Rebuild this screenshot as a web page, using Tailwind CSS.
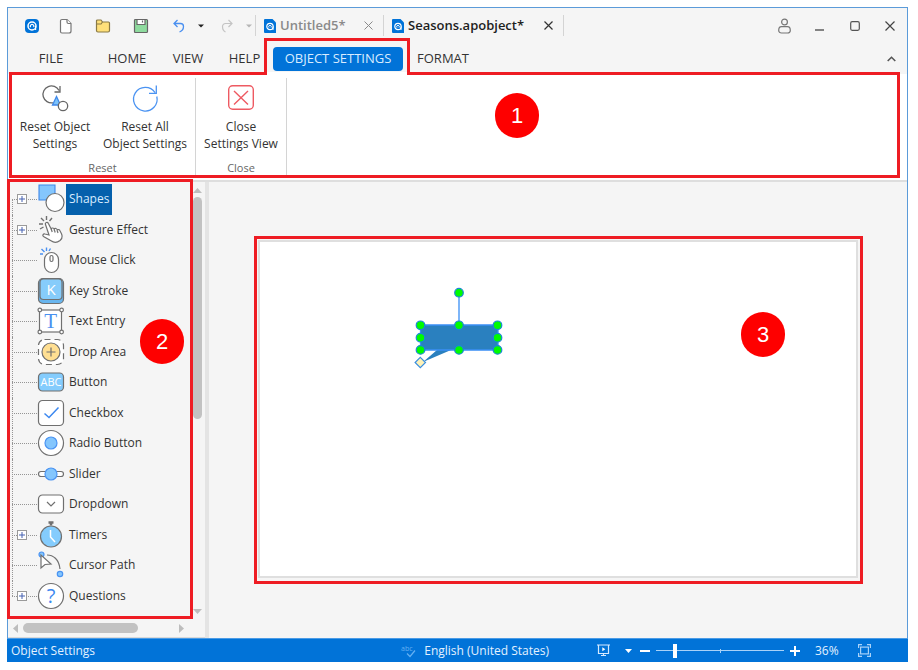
<!DOCTYPE html>
<html lang="en">
<head>
    <meta charset="UTF-8">
    <meta name="viewport" content="width=device-width, initial-scale=1.0">
    <title>Object Settings</title>
    <script src="https://cdn.jsdelivr.net/npm/@tailwindcss/browser@4"></script>
</head>
<body class="bg-white font-['Open_Sans','Noto_Sans',sans-serif] text-[12px] text-[#333]">
    <div class="h-screen pt-[7px] pl-[7px] pr-[10px] pb-2">
        <div class="h-full flex flex-col bg-[#f5f5f5] border border-[#5b9bd9] border-b-0">

            <!-- title bar -->
            <header class="h-[35px] shrink-0 flex items-center">
                <button class="ml-2 w-8 flex justify-center" aria-label="Application menu">
                    <svg class="w-[14px] h-[14px]" viewBox="0 0 14 14" fill="none">
                        <rect width="14" height="14" rx="4" fill="#0173d8"/>
                        <circle cx="7" cy="7" r="4" stroke="#fff" stroke-width="1.5"/>
                        <path d="M5.6 8.2a1.8 1.8 0 1 1 3 0M10.6 7v4" stroke="#fff" stroke-width="1.2"/>
                    </svg>
                </button>
                <button class="w-9 flex justify-center" aria-label="New">
                    <svg class="w-[14px] h-4" viewBox="0 0 14 16" fill="#fff" stroke="#777" stroke-width="1.2">
                        <path d="M3 1.5h5l4 4v7.500a2 2 0 0 1-2 2H3a1.500 1.500 0 0 1-1.500-1.500V3A1.500 1.500 0 0 1 3 1.500z"/>
                        <path d="M8 1.500v2.500a1.500 1.500 0 0 0 1.500 1.500H12"/>
                    </svg>
                </button>
                <button class="w-[38px] flex justify-center" aria-label="Open">
                    <svg class="w-4 h-4" viewBox="0 0 16 16" fill="#ffe07a" stroke="#8a7a45" stroke-width="1.2">
                        <path d="M1.500 12.500V3q0-1 1-1h3.500l1.500 2h6q1 0 1 1v7.500q0 1.500-1.500 1.500H3q-1.500 0-1.500-1.500z"/>
                        <path d="M1.500 6h4.500l1.500-2"/>
                    </svg>
                </button>
                <button class="w-[38px] flex justify-center" aria-label="Save">
                    <svg class="w-4 h-4" viewBox="0 0 16 16" fill="#8edb9e" stroke="#666" stroke-width="1.200">
                        <path d="M1.500 2.500q0-1 1-1h11q1 0 1 1v11q0 1-1 1h-11q-1 0-1-1z"/>
                        <path d="M4 1.500h8v5H4z" fill="#fff"/>
                        <path d="M9.500 2.500v2"/>
                    </svg>
                </button>
                <button class="w-[38px] flex justify-center" aria-label="Undo">
                    <svg class="w-3 h-[14px]" viewBox="0 0 12 14" fill="none" stroke="#4a90f0" stroke-width="1.300">
                        <path d="M4.500 1 1 4.500 4.500 8M1 4.500h6.500a3 3 0 0 1 3 3c0 2.500-1.500 4.500-4 5.500"/>
                    </svg>
                </button>
                <button class="w-[10px] flex justify-start" aria-label="Undo history">
                    <svg class="w-[6px] h-1" viewBox="0 0 6 4" fill="#222"><path d="M0 .5h6L3 3.500z"/></svg>
                </button>
                <button class="w-[38px] flex justify-center" aria-label="Redo">
                    <svg class="w-3 h-[14px]" viewBox="0 0 12 14" fill="none" stroke="#c4c4c4" stroke-width="1.200">
                        <path d="M7.500 1 11 4.500 7.500 8M11 4.500H4.500a3 3 0 0 0-3 3c0 2.500 1 4.500 3 5.500"/>
                    </svg>
                </button>
                <button class="w-[9px] flex justify-start" aria-label="Redo history">
                    <svg class="w-[6px] h-1" viewBox="0 0 6 4" fill="#b5b5b5"><path d="M0 .5h6L3 3.500z"/></svg>
                </button>
                <nav class="flex text-[13px]">
                    <div class="w-32 h-[21px] pl-2 pr-[10px] flex items-center border-l border-[#d4d4d4]">
                        <svg class="w-3 h-[14px] shrink-0" viewBox="0 0 12 14" fill="none">
                            <path d="M1 0h7.500L12 3.500V14H1a1 1 0 0 1-1-1V1a1 1 0 0 1 1-1z" fill="#0173d8"/>
                            <circle cx="6" cy="7.500" r="3.200" stroke="#fff" stroke-width="1.200"/>
                            <path d="M5 8.500a1.300 1.300 0 1 1 2 0M9 7.500v3.500" stroke="#fff"/>
                        </svg>
                        <a href="#" class="ml-1 font-semibold text-[#8a8a8a]">Untitled5*</a>
                        <button class="ml-auto" aria-label="Close Untitled5">
                            <svg class="w-[9px] h-[9px]" viewBox="0 0 9 9" stroke="#8a8a8a"><path d="M.5.5l8 8M8.500.5l-8 8"/></svg>
                        </button>
                    </div>
                    <div class="w-[181px] h-[21px] pl-2 pr-[10px] flex items-center border-x border-[#d4d4d4]">
                        <svg class="w-3 h-[14px] shrink-0" viewBox="0 0 12 14" fill="none">
                            <path d="M1 0h7.500L12 3.500V14H1a1 1 0 0 1-1-1V1a1 1 0 0 1 1-1z" fill="#0173d8"/>
                            <circle cx="6" cy="7.500" r="3.200" stroke="#fff" stroke-width="1.200"/>
                            <path d="M5 8.500a1.300 1.300 0 1 1 2 0M9 7.500v3.500" stroke="#fff"/>
                        </svg>
                        <a href="#" class="ml-1 font-semibold text-[#1e1e1e]">Seasons.apobject*</a>
                        <button class="ml-auto" aria-label="Close Seasons.apobject">
                            <svg class="w-[9px] h-[9px]" viewBox="0 0 9 9" stroke="#333" stroke-width="1.200"><path d="M.5.5l8 8M8.500.5l-8 8"/></svg>
                        </button>
                    </div>
                </nav>
                <div class="ml-auto flex items-center">
                    <button class="w-[35px] flex justify-center" aria-label="Account">
                        <svg class="w-[13px] h-4" viewBox="0 0 13 16" fill="none" stroke="#777" stroke-width="1.200">
                            <circle cx="6.500" cy="4" r="2.900"/>
                            <path d="M3.500 8.700h6c1.800 0 2.800 2 2.800 3.800 0 1.700-1.300 2.500-2.800 2.500h-6C2 15 .7 14.200.7 12.500c0-1.800 1-3.800 2.800-3.800z"/>
                        </svg>
                    </button>
                    <button class="w-[35px] h-4 flex justify-center items-center" aria-label="Minimize">
                        <svg class="w-[9px] h-3" viewBox="0 0 9 12" stroke="#444" stroke-width="1.300"><path d="M0 10h9"/></svg>
                    </button>
                    <button class="w-[35px] flex justify-center" aria-label="Maximize">
                        <svg class="w-[10px] h-[10px]" viewBox="0 0 10 10" fill="none" stroke="#555" stroke-width="1.200"><rect x=".7" y=".7" width="8.600" height="8.600" rx="1.500"/></svg>
                    </button>
                    <button class="w-[35px] flex justify-center" aria-label="Close">
                        <svg class="w-[10px] h-[10px]" viewBox="0 0 10 10" stroke="#444" stroke-width="1.200"><path d="M.5.5l9 9M9.500.5l-9 9"/></svg>
                    </button>
                </div>
            </header>

            <!-- menu tabs -->
            <nav class="h-[31px] shrink-0 flex items-center text-[13px]">
                <button class="w-[86px]">FILE</button>
                <button class="w-[66px]">HOME</button>
                <button class="w-14">VIEW</button>
                <button class="w-[57px]">HELP</button>
                <div class="relative">
                    <button class="w-[130px] h-6 rounded-[4px] bg-[#0173d8] text-[#d9ecff] block">OBJECT SETTINGS</button>
                    <!-- callout outline around the tab, open at the bottom -->
                    <div class="absolute z-20 pointer-events-none -top-[9px] -left-[9px] -right-[7px] h-[37px] border-3 border-b-0 border-[#ee1c23] flex items-end">
                        <div class="w-full h-[3px] bg-white"></div>
                    </div>
                </div>
                <button class="w-20">FORMAT</button>
                <button class="ml-auto w-8 flex justify-center" aria-label="Collapse ribbon">
                    <svg class="w-[9px] h-[6px]" viewBox="0 0 9 6" fill="none" stroke="#555" stroke-width="1.600"><path d="M.7 5 4.500 1.300 8.300 5"/></svg>
                </button>
            </nav>

            <!-- ribbon -->
            <section class="relative h-[108px] shrink-0 bg-white border-b-2 border-[#dedede] flex text-center leading-[17px]">
                <div class="w-[188px] flex flex-col mt-1 mb-1 pl-[2px] border-r border-[#d4d4d4]">
                    <div class="flex">
                        <button class="w-[90px] flex flex-col items-center">
                            <svg class="w-8 h-8 mt-1 mb-1" viewBox="0 0 32 32" fill="none" stroke="#666" stroke-width="1.300">
                                <path d="M14 20.800A8.500 8.500 0 1 1 20 8.500M21 4v6h-5.500"/>
                                <path d="M17.500 14.500 21.500 23h-8z" fill="#7cc3fb" stroke="#3f87e8"/>
                                <circle cx="24" cy="24" r="4.700" fill="#fff"/>
                            </svg>
                            <span>Reset Object<br>Settings</span>
                        </button>
                        <button class="w-[90px] flex flex-col items-center">
                            <svg class="w-8 h-8 mt-1 mb-1" viewBox="0 0 32 32" fill="none" stroke="#4a93f2" stroke-width="1.300">
                                <path d="M27.800 14.500A11.800 11.800 0 1 1 26 10.500M27.300 3.500v7.800H20"/>
                            </svg>
                            <span>Reset All<br>Object Settings</span>
                        </button>
                    </div>
                    <div class="mt-auto text-[11px] text-[#666]">Reset</div>
                </div>
                <div class="w-[91px] flex flex-col mt-1 mb-1 border-r border-[#d4d4d4]">
                    <button class="flex flex-col items-center">
                        <svg class="w-8 h-8 mt-1 mb-1" viewBox="0 0 32 32" fill="none" stroke="#ee5a62" stroke-width="1.400">
                            <rect x="3.700" y="3.700" width="24.600" height="23.600" rx="4"/>
                            <path d="M9 9l14 13.500M23 9 9 22.500"/>
                        </svg>
                        <span>Close<br>Settings View</span>
                    </button>
                    <div class="mt-auto text-[11px] text-[#666]">Close</div>
                </div>
                <div class="absolute z-10 pointer-events-none -top-[2px] left-px right-[7px] bottom-[2px] border-3 border-[#ee1c23]"></div>
                <div class="absolute z-10 top-[19px] left-[487px] w-11 h-[45px] rounded-full bg-[#fe0000] text-white text-[22px] font-['Liberation_Sans',sans-serif] flex items-center justify-center">1</div>
            </section>

            <!-- body -->
            <main class="flex-1 min-h-0 flex">
                <aside class="relative w-[201px] shrink-0 flex flex-col border-r-4 border-[#e4e4e4]">
                    <div class="flex-1 min-h-0 flex">
                        <ul id="tree" class="flex-1 pt-[2px] pb-2 pl-1 flex flex-col text-[#333]"></ul>
                        <div class="w-3 mr-[2px] pt-[6px] pb-[5px] flex flex-col items-center">
                            <svg class="w-[9px] h-[5px]" viewBox="0 0 9 5" fill="#bdbdbd"><path d="M0 5 4.500 0 9 5z"/></svg>
                            <div class="mt-1 w-[9px] h-[52%] rounded-full bg-[#c2c2c2]"></div>
                            <svg class="mt-auto w-[9px] h-[5px]" viewBox="0 0 9 5" fill="#bdbdbd"><path d="M0 0 4.500 5 9 0z"/></svg>
                        </div>
                    </div>
                    <div class="h-[19px] shrink-0 pl-[5px] pr-[21px] flex items-center border-b border-[#d9d9d9]">
                        <svg class="w-[5px] h-[9px]" viewBox="0 0 5 9" fill="#bdbdbd"><path d="M5 0 0 4.500 5 9z"/></svg>
                        <div class="ml-[5px] w-[115px] h-[10px] rounded-full bg-[#c2c2c2]"></div>
                        <svg class="ml-auto w-[5px] h-[9px]" viewBox="0 0 5 9" fill="#bdbdbd"><path d="M0 0 5 4.500 0 9z"/></svg>
                    </div>
                    <div class="absolute z-10 pointer-events-none -top-[3px] -left-px w-[186px] bottom-[19px] border-3 border-[#ee1c23]"></div>
                    <div class="absolute z-10 top-[137px] left-[132px] w-11 h-[45px] rounded-full bg-[#fe0000] text-white text-[22px] font-['Liberation_Sans',sans-serif] flex items-center justify-center">2</div>
                </aside>

                <section class="flex-1 min-w-0 py-[54px] pl-[45px] pr-11">
                    <div class="h-full border-3 border-[#ee1c23] p-px pr-[2px] pb-[3px]">
                        <div class="relative h-full bg-white border-2 border-[#dfdfdf]">
                            <!-- selected callout shape with its handles -->
                            <svg class="absolute left-[150px] top-[43px] w-[96px] h-[92px]" viewBox="410 285 96 92">
                                <path d="M420.500 325h77.500v25h-47l-28 12 14-12h-16.500z" fill="#2a80bf"/>
                                <path d="M459 293v32M420.500 325H498v25h-77.500z" fill="none" stroke="#3a8ff5" stroke-width="1.300"/>
                                <g fill="#00fb00" stroke="#1c86d8" stroke-width="1.200">
                                    <circle cx="459" cy="292.700" r="4.300"/>
                                    <circle cx="420.500" cy="325.300" r="4.300"/>
                                    <circle cx="459" cy="325.300" r="4.300"/>
                                    <circle cx="497.500" cy="325.300" r="4.300"/>
                                    <circle cx="420.500" cy="337.700" r="4.300"/>
                                    <circle cx="497.500" cy="337.700" r="4.300"/>
                                    <circle cx="420.500" cy="349.900" r="4.300"/>
                                    <circle cx="459" cy="349.900" r="4.300"/>
                                    <circle cx="497.500" cy="349.900" r="4.300"/>
                                </g>
                                <path d="M420.300 357.300l5.200 5.200-5.200 5.200-5.200-5.200z" fill="#fff2b8" stroke="#3a8fe0" stroke-width="1.200"/>
                            </svg>
                            <div class="absolute top-[70px] left-[481px] w-11 h-[45px] rounded-full bg-[#fe0000] text-white text-[22px] font-['Liberation_Sans',sans-serif] flex items-center justify-center">3</div>
                        </div>
                    </div>
                </section>
            </main>

            <!-- status bar -->
            <footer class="h-6 shrink-0 -mx-px pl-1 flex items-center bg-[#0173d8] border-t border-[#4a9be6] text-[#e3f1ff]">
                <span>Object Settings</span>
                <div class="ml-auto flex items-center">
                    <button class="flex items-center gap-2">
                        <svg class="w-[15px] h-4 overflow-visible" viewBox="0 0 15 16" fill="none" stroke="#64b0f2">
                            <text x="0" y="8" font-size="7" fill="#64b0f2" stroke="none">abc</text>
                            <path d="M6 10.500 9 13.500 14 7.500" stroke-width="1.200"/>
                        </svg>
                        English (United States)
                    </button>
                    <button class="ml-12" aria-label="Preview">
                        <svg class="w-[13px] h-[13px] block" viewBox="0 0 13 13" fill="none" stroke="#d5eaff" stroke-width="1.200">
                            <path d="M0 1h13M1.500 1v8.500h10V1M6.500 9.500V12M4 11.500h5"/>
                            <path d="M5.300 3.300v4l3-2z" fill="#fff" stroke="none"/>
                        </svg>
                    </button>
                    <button class="ml-[15px]" aria-label="Preview options">
                        <svg class="w-[7px] h-1 block" viewBox="0 0 7 4" fill="#fff"><path d="M0 0h7L3.500 4z"/></svg>
                    </button>
                    <button class="ml-2" aria-label="Zoom out">
                        <svg class="w-[10px] h-[10px] block" viewBox="0 0 10 10" stroke="#fff" stroke-width="2"><path d="M0 5h10"/></svg>
                    </button>
                    <div class="relative ml-[6px] w-32 h-[14px]">
                        <input type="range" min="0" max="100" value="14" aria-label="Zoom" class="block w-full h-[14px] appearance-none bg-transparent bg-[linear-gradient(#a9d2f8,#a9d2f8)] bg-[length:100%_1px] bg-center bg-no-repeat [&::-webkit-slider-thumb]:appearance-none [&::-webkit-slider-thumb]:w-1 [&::-webkit-slider-thumb]:h-[14px] [&::-webkit-slider-thumb]:bg-white">
                        <div class="absolute left-1/2 top-[5px] w-px h-1 bg-[#a9d2f8]"></div>
                    </div>
                    <button class="ml-[6px]" aria-label="Zoom in">
                        <svg class="w-[10px] h-[10px] block" viewBox="0 0 10 10" stroke="#fff" stroke-width="2"><path d="M0 5h10M5 0v10"/></svg>
                    </button>
                    <span class="ml-[15px] w-[26px]">36%</span>
                    <button class="ml-[17px] mr-[37px]" aria-label="Fit to window">
                        <svg class="w-[13px] h-[13px] block" viewBox="0 0 13 13" fill="none" stroke="#a9d2f8" stroke-width="1.200">
                            <path d="M.6 4V.6H4M9 .6h3.400V4M12.400 9v3.400H9M4 12.400H.6V9"/>
                            <rect x="2.600" y="3.100" width="7.800" height="6.800"/>
                        </svg>
                    </button>
                </div>
            </footer>
        </div>
    </div>

    <script>
        // each icon is drawn on a 28x30 box
        const items = [
            { label: 'Shapes', expandable: true, selected: true, icon: '<path d="M2 1h16v15H2z" fill="#84c6fd" stroke="#3f87e8" stroke-width="1.100"/><circle cx="18" cy="18.500" r="9" fill="#fff"/>' },
            { label: 'Gesture Effect', expandable: true, icon: '<g stroke-width="1.400"><path d="M2 9h4M4 3l3 3M9.500 1v4M15 3l-2.500 3M3 14l3.500-2"/></g><path d="M8.500 9.500c-.8-2 2-3 2.900-1l2.800 5.500c.6-1.500 2.600-1.200 3 .2.800-1.300 2.700-.8 3 .8 1-1 2.500-.3 2.900 1 2 3.500 3.400 6.500-.1 9.500-3 2.300-6.500 2-9 .3l-7.500-4.300c-1.500-1.200-.2-3 1.500-2.500l4 1z" fill="#fff"/><path d="M14.200 14l1 3M17.200 14.500l1 3M20.200 15.500l.8 2.500"/>' },
            { label: 'Mouse Click', icon: '<path d="M3 9h3M4.500 4l3 3M9.500 2.500V6M13.500 3.500 12 6" stroke="#4a90f0" stroke-width="1.400"/><rect x="7.500" y="7.500" width="14" height="20" rx="7" fill="#fff"/><rect x="13" y="10.500" width="3" height="6" rx="1.500"/>' },
            { label: 'Key Stroke', icon: '<rect x="1.500" y="2.500" width="25" height="25" rx="4.500" fill="#68b5ee"/><rect x="3" y="3" width="22" height="20.500" rx="3.500" fill="#86ccfb"/><text x="14" y="18.500" font-size="15" text-anchor="middle" fill="#fff" stroke="none">K</text>' },
            { label: 'Text Entry', icon: '<rect x="2.500" y="4" width="22" height="22" fill="#fff"/><g fill="#fff"><circle cx="2.800" cy="4" r="1.800"/><circle cx="24.600" cy="4" r="1.800"/><circle cx="2.800" cy="26" r="1.800"/><circle cx="24.600" cy="26" r="1.800"/></g><text x="13.700" y="21.500" font-size="21" font-family="Liberation Serif, serif" text-anchor="middle" fill="#4a90f0" stroke="none">T</text>' },
            { label: 'Drop Area', icon: '<rect x="1.500" y="2.500" width="25" height="25" rx="6" fill="#fff" stroke-dasharray="6 4"/><circle cx="14" cy="15" r="9" fill="#ffdf92"/><path d="M9.500 15h9M14 10.500v9"/>' },
            { label: 'Button', icon: '<rect x="1.500" y="6" width="25" height="18" rx="4" fill="#84ccfd"/><text x="14" y="18.500" font-size="11" text-anchor="middle" fill="#fff" stroke="none">ABC</text>' },
            { label: 'Checkbox', icon: '<rect x="1.500" y="2.500" width="25" height="25" rx="4" fill="#fff"/><path d="M7.500 15.500 12 19.500 21.500 9.500" stroke="#3c88f0" stroke-width="1.500"/>' },
            { label: 'Radio Button', icon: '<circle cx="14" cy="15" r="12.500" fill="#fff"/><circle cx="14" cy="15" r="6" fill="#84c6fd" stroke="#4a93f2"/>' },
            { label: 'Slider', icon: '<rect x="1.500" y="12.500" width="25" height="5" rx="2.500" fill="#fff"/><circle cx="14" cy="15" r="6" fill="#84c6fd" stroke="#4a93f2"/>' },
            { label: 'Dropdown', icon: '<rect x="1.500" y="6" width="25" height="18" rx="4" fill="#fff"/><path d="M10 13l4 4 4-4"/>' },
            { label: 'Timers', expandable: true, icon: '<path d="M11.500 2.500h5M14 2.500v3" stroke-width="2.500"/><circle cx="14" cy="16.500" r="10.500" fill="#84ccfd"/><path d="M13.500 10v7l4.500 5" stroke="#fff" stroke-width="1.500"/>' },
            { label: 'Cursor Path', icon: '<circle cx="4.500" cy="4.500" r="2.500" fill="#84c6fd" stroke="#4a93f2"/><path d="M10 5c6 0 12 4 13 14"/><path d="M4 5v13l4-3.500 6-.5z" fill="#fff"/><circle cx="23" cy="24" r="2.700" fill="#84c6fd" stroke="#4a93f2"/>' },
            { label: 'Questions', expandable: true, icon: '<circle cx="14" cy="15" r="12.500" fill="#fff"/><text x="14" y="22" font-size="20" text-anchor="middle" fill="#3c88f0" stroke="none">?</text>' },
        ];

        const rows = items.map((item, i) => {
            // the trunk line starts at the first row's middle and stops at the last one's
            let trunk = 'top-0 bottom-0';
            if (i === 0) trunk = 'top-1/2 bottom-0';
            if (i === items.length - 1) trunk = 'top-0 bottom-1/2';
            const plus = item.expandable ? `
                <button class="relative w-[10px] h-[10px] block bg-white border border-[#9a9a9a]" aria-label="Expand ${item.label}">
                    <svg class="w-2 h-2 block" viewBox="0 0 8 8" stroke="#4560b0"><path d="M1 4h6M4 1v6"/></svg>
                </button>` : '';
            return `
                <li class="flex-1 min-h-0 flex items-center">
                    <div class="relative self-stretch w-[25px] pl-[5px] flex items-center">
                        <div class="absolute left-0 ${trunk} border-l border-dotted border-[#959595]"></div>
                        <div class="absolute left-0 right-0 top-1/2 border-t border-dotted border-[#959595]"></div>
                        ${plus}
                    </div>
                    <svg class="w-7 h-[30px] shrink-0 overflow-visible" viewBox="0 0 28 30" fill="none" stroke="#707070" stroke-width="1.200">${item.icon}</svg>
                    <a href="#" class="self-stretch flex items-center ml-px px-[3px] ${item.selected ? 'bg-[#0560ac] text-[#d9ecff]' : ''}">${item.label}</a>
                </li>`;
        });
        document.getElementById('tree').innerHTML = rows.join('');
    </script>
</body>
</html>
